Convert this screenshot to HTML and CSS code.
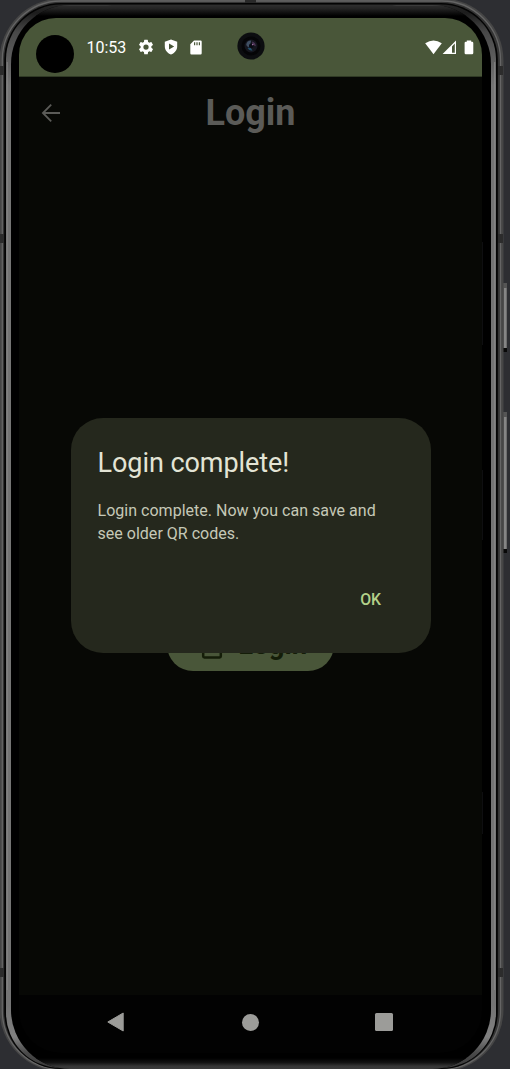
FILE: index.html
```
<!DOCTYPE html>
<html lang="en">
<head>
<meta charset="utf-8">
<title>Login</title>
<link rel="stylesheet" href="styles.css">
</head>
<body>
<div class="stage">
  <svg class="frame" width="510" height="1069" viewBox="0 0 510 1069" aria-hidden="true">
    <defs>
      <linearGradient id="rim" x1="0" x2="0" y1="0" y2="1069" gradientUnits="userSpaceOnUse">
        <stop offset="0" stop-color="#2c2c2c"/><stop offset=".012" stop-color="#1c1c1c"/><stop offset=".03" stop-color="#484848"/><stop offset=".08" stop-color="#747474"/>
        <stop offset=".94" stop-color="#747474"/><stop offset=".97" stop-color="#808080"/><stop offset=".985" stop-color="#4a4a4a"/><stop offset="1" stop-color="#383838"/>
      </linearGradient>
      <linearGradient id="topshade" x1="0" x2="0" y1="0" y2="1">
        <stop offset="0" stop-color="#303030"/><stop offset=".35" stop-color="#242424"/><stop offset="1" stop-color="#000"/>
      </linearGradient>
      <linearGradient id="bottomshade" x1="0" x2="0" y1="0" y2="1">
        <stop offset="0" stop-color="#000"/><stop offset=".4" stop-color="#111"/><stop offset=".75" stop-color="#363636"/><stop offset="1" stop-color="#3b3b3b"/>
      </linearGradient>
      <clipPath id="glass"><rect x="11" y="5" width="480" height="1064" rx="59"/></clipPath>
    </defs>
    <rect x="501" y="283" width="6" height="69" fill="#555"/>
    <rect x="504" y="288" width="2.5" height="60" fill="#858585"/>
    <rect x="503" y="348" width="4" height="4" fill="#080808"/>
    <rect x="501" y="412" width="6" height="140" fill="#555"/>
    <rect x="504" y="417" width="2.5" height="132" fill="#858585"/>
    <rect x="503" y="549" width="4" height="4" fill="#080808"/>
    <rect x="-.5" y="-1.5" width="504" height="1073" rx="62" fill="#464646"/>
    <rect x="2.3" y="1" width="498.2" height="1068.5" rx="59" fill="#343434" stroke="#656565" stroke-width="1.3"/>
    <rect x="0" y="66" width="5" height="9" fill="#2c2c2c"/>
    <rect x="0" y="234" width="5" height="9" fill="#2c2c2c"/>
    <rect x="0" y="968" width="5" height="9" fill="#2c2c2c"/>
    <rect x="498" y="66" width="5" height="9" fill="#2c2c2c"/>
    <rect x="498" y="234" width="5" height="9" fill="#2c2c2c"/>
    <rect x="498" y="968" width="5" height="9" fill="#2c2c2c"/>
    <rect x="245" y="0" width="11" height="3" fill="#292929"/>
    <rect x="4.2" y="3" width="493.6" height="1066" rx="57" fill="#030303"/>
    <rect x="6" y="4.5" width="490" height="1063.5" rx="55" fill="url(#rim)"/>
    <path d="M7.2 990V62M494.7 62V990" stroke="#8b8b8b" stroke-width=".8" fill="none"/>
    <rect x="11" y="5" width="480" height="1064" rx="59" fill="#000"/>
    <g clip-path="url(#glass)">
      <rect x="10" y="4.5" width="482" height="11.5" fill="url(#topshade)"/>
      <path d="M46 4.5h58l8 1.2H40zM398 4.5h54l8 1.5h-68z" fill="#3b3b3b"/>
      <rect x="10" y="1058" width="482" height="11" fill="url(#bottomshade)"/>
    </g>
  </svg>

  <main class="screen">
    <header class="status">
      <span class="time">10:53</span>
      <svg class="gear" width="18" height="18" viewBox="0 0 24 24"><path fill="#fff" fill-rule="evenodd" d="M19.14 12.94c.04-.3.06-.61.06-.94s-.02-.64-.07-.94l2.03-1.58a.49.49 0 0 0 .12-.61l-1.92-3.32a.49.49 0 0 0-.59-.22l-2.39.96a7 7 0 0 0-1.62-.94l-.36-2.54A.48.48 0 0 0 13.92 2.4h-3.84a.48.48 0 0 0-.48.41l-.36 2.54c-.59.24-1.13.57-1.62.94l-2.39-.96a.48.48 0 0 0-.59.22L2.72 8.87a.48.48 0 0 0 .12.61l2.03 1.58c-.05.3-.07.62-.07.94s.02.64.07.94l-2.03 1.58a.49.49 0 0 0-.12.61l1.92 3.32c.12.22.37.29.59.22l2.39-.96c.5.38 1.03.7 1.62.94l.36 2.54c.05.24.24.41.48.41h3.84c.24 0 .44-.17.48-.41l.36-2.54a7 7 0 0 0 1.62-.94l2.39.96c.22.08.47 0 .59-.22l1.92-3.32a.48.48 0 0 0-.12-.61zM12 15.5a3.5 3.5 0 1 1 0-7 3.5 3.5 0 0 1 0 7z"/></svg>
      <svg class="shield" width="14" height="16" viewBox="0 0 14 16"><path fill="#fff" fill-rule="evenodd" d="M7 .4 13.2 2.8V7.2C13.2 11 10.7 14.2 7 15.4 3.3 14.2.8 11 .8 7.2V2.8zM5 4.6v6L10.2 7.6z"/></svg>
      <svg class="card-icon" width="12" height="15" viewBox="0 0 12 15"><path fill="#fff" fill-rule="evenodd" d="M4 .5h6.6Q11.7.5 11.7 1.6V13.2Q11.7 14.4 10.6 14.4H1.4Q.3 14.4.3 13.2V4.2zM4 2.3v3h1.2v-3zM6.4 2.3v3h1.2v-3zM8.8 2.3v3H10v-3z"/></svg>
      <div class="signals">
        <svg width="17" height="15" viewBox="0 0 17 15"><path fill="#fff" d="M.2 3.3Q8.5-2.5 16.8 3.3L8.5 14.2z"/></svg>
        <svg class="cell" width="15" height="15" viewBox="0 0 15 15"><path fill="#fff" fill-rule="evenodd" d="M14 .6V14H.6zM12.8 3.6 10 6.5V12.7h2.8z"/></svg>
        <svg class="battery" width="10" height="15" viewBox="0 0 10 15"><path fill="#fff" d="M2.8.4h4.4v1.3h.9Q9.3 1.7 9.3 2.9v10Q9.3 14.2 8.1 14.2H1.9Q.6 14.2.6 12.9v-10Q.6 1.7 1.9 1.7h.9z"/></svg>
      </div>
    </header>
    <section class="app">
      <div class="appbar">
        <svg class="back" width="20" height="20" viewBox="0 0 20 20"><path d="M19 10H2M10.2 1.7 1.9 10l8.3 8.3" fill="none" stroke="#5b5b58" stroke-width="1.8"/></svg>
        <h1>Login</h1>
      </div>
      <button class="login">
        <svg width="22" height="28" viewBox="0 0 22 28"><path d="M6 11V7a5 5 0 0 1 10 0v4M2.2 11h17.6v14.3q0 1.2-1.2 1.2H3.4q-1.2 0-1.2-1.2z" fill="none" stroke="#141d08" stroke-width="2.5"/></svg>
        <span>Login</span>
      </button>
    </section>
    <nav class="nav">
      <svg width="18" height="20" viewBox="0 0 18 20"><path d="M16.2 1v18L.8 10z" fill="#9c9c99" stroke="#9c9c99" stroke-linejoin="round"/></svg>
      <span class="home"></span>
      <span class="recent"></span>
    </nav>
  </main>

  <svg class="frame" width="510" height="1069" viewBox="0 0 510 1069" aria-hidden="true"><path d="M482.5 242v103M482.5 470v70M482.5 792v42" stroke="#121214" stroke-width=".8"/></svg>
  <i class="cutout"></i>
  <svg class="lens" width="28" height="28" viewBox="0 0 28 28"><circle cx="14" cy="14" r="13.6" fill="#0c0d10"/><circle cx="14" cy="14" r="9.5" fill="#050507"/><circle cx="14" cy="14" r="6.5" fill="#15161e"/><path d="M9.2 13a5 5 0 0 1 5-4.4l-1 4-1.8 3z" fill="#405064"/><path d="M10.5 16q2 3.3 5 2.4l-2-3z" fill="#22506b"/><path d="M15 9.5q4 1 3.7 4.8l-3-1.6z" fill="#493253"/><circle cx="14.3" cy="13.8" r="2.3" fill="#090a12"/><circle cx="15.7" cy="12.6" r=".8" fill="#9b70a0"/></svg>

  <div class="dialog" role="dialog">
    <h2>Login complete!</h2>
    <p>Login complete. Now you can save and<br>see older QR codes.</p>
    <button class="ok">OK</button>
  </div>
</div>
</body>
</html>
```
FILE: styles.css
```
* { box-sizing: border-box; }
body { margin: 0; background: #2d2e32; font-family: Roboto, sans-serif; overflow: hidden; }
h1, h2, p { margin: 0; }
button { border: 0; font-family: inherit; padding: 0; }
svg { display: block; flex: none; }

.stage { position: relative; width: 510px; height: 1069px; padding: 18px 28px 16px 19px; overflow: hidden; }
.frame { position: absolute; left: 0; top: 0; }

.screen { position: relative; display: flex; flex-direction: column; width: 463px; height: 1035px; border-radius: 37px 37px 42px 42px; overflow: hidden; }
.status { display: flex; align-items: center; height: 58.5px; padding: 0 8.5px 0 67.5px; background: #495639; border-bottom: 1px solid #303a25; color: #fff; }
.time { width: 50.5px; font-size: 16px; line-height: 20px; padding-top: 2px; }
.gear { margin-top: 1px; }
.shield { margin: 1px 0 0 9px; }
.card-icon { margin: 1px 0 0 12px; }
.signals { display: flex; margin: 1px 0 0 auto; }
.signals svg:first-child { margin-right: -.5px; }
.cell { margin-left: 0; }
.battery { margin-left: 7px; }

.app { display: flex; flex-direction: column; align-items: center; height: 918.5px; background: #070805; }
.appbar { display: flex; align-items: center; width: 100%; height: 73px; padding-left: 22px; }
.appbar h1 { flex: 1; padding-right: 42px; text-align: center; font-size: 36px; line-height: 42px; font-weight: 700; color: #5b5b58; }
.login { display: flex; align-items: center; justify-content: center; gap: 15.5px; width: 167px; height: 52px; margin-top: 469.5px; padding-left: 7px; border-radius: 26px; background: #495639; color: #141d08; font-size: 27.5px; font-weight: 700; }
.login span { padding-bottom: 2px; }

.nav { display: flex; align-items: center; flex: 1; padding: 0 89.5px 4px 88px; background: #020202; justify-content: space-between; }
.home { width: 17px; height: 17px; margin-left: 1px; border-radius: 50%; background: #9c9c99; }
.recent { width: 17.5px; height: 17.5px; border-radius: 1.5px; background: #9c9c99; }

.cutout { position: absolute; left: 36px; top: 35px; width: 38px; height: 38px; border-radius: 50%; background: #000; }
.lens { position: absolute; left: 237px; top: 32px; }

.dialog { position: absolute; left: 70.5px; top: 418px; width: 360px; height: 235px; padding: 27px 27px; border-radius: 32px; background: #25281d; display: flex; flex-direction: column; }
.dialog h2 { font-size: 27px; line-height: 36px; font-weight: 400; letter-spacing: -.06px; color: #e3e4d5; }
.dialog p { margin-top: 18px; font-size: 16px; line-height: 23px; letter-spacing: .02px; color: #c5c8b7; white-space: nowrap; }
.ok { align-self: flex-end; margin: 42.5px 22.5px 0 0; background: none; color: #b3d189; font-size: 15.8px; line-height: 24px; font-weight: 500; }
```
